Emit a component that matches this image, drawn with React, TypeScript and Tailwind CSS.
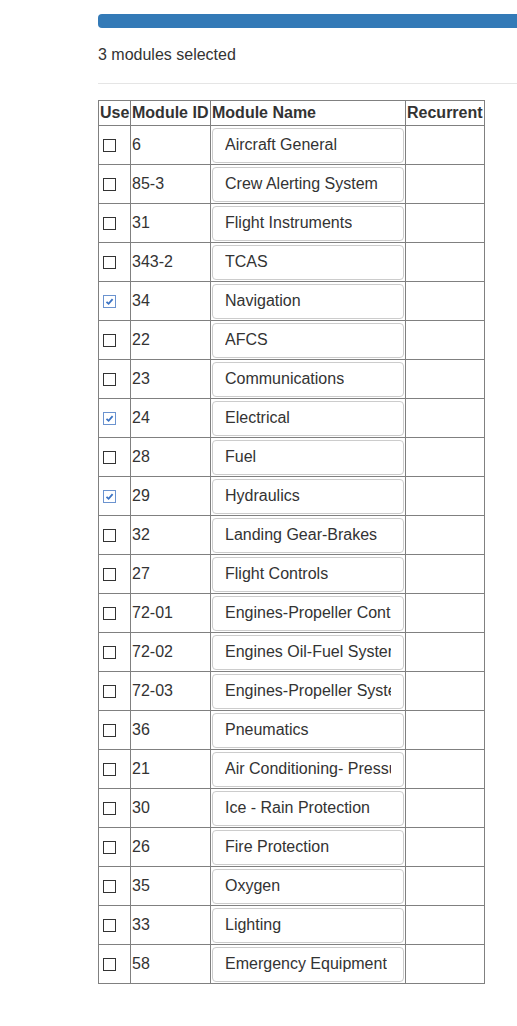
import React from 'react';

const modules = [
  { id: '6', name: 'Aircraft General', checked: false },
  { id: '85-3', name: 'Crew Alerting System', checked: false },
  { id: '31', name: 'Flight Instruments', checked: false },
  { id: '343-2', name: 'TCAS', checked: false },
  { id: '34', name: 'Navigation', checked: true },
  { id: '22', name: 'AFCS', checked: false },
  { id: '23', name: 'Communications', checked: false },
  { id: '24', name: 'Electrical', checked: true },
  { id: '28', name: 'Fuel', checked: false },
  { id: '29', name: 'Hydraulics', checked: true },
  { id: '32', name: 'Landing Gear-Brakes', checked: false },
  { id: '27', name: 'Flight Controls', checked: false },
  { id: '72-01', name: 'Engines-Propeller Controls', checked: false },
  { id: '72-02', name: 'Engines Oil-Fuel System', checked: false },
  { id: '72-03', name: 'Engines-Propeller System', checked: false },
  { id: '36', name: 'Pneumatics', checked: false },
  { id: '21', name: 'Air Conditioning- Pressurization', checked: false },
  { id: '30', name: 'Ice - Rain Protection', checked: false },
  { id: '26', name: 'Fire Protection', checked: false },
  { id: '35', name: 'Oxygen', checked: false },
  { id: '33', name: 'Lighting', checked: false },
  { id: '58', name: 'Emergency Equipment', checked: false },
];

const Check = ({ checked }: { checked: boolean }) =>
  checked ? (
    <span className="ml-[3px] block w-[13px] h-[13px] border border-[#6b93cf] bg-white">
      <svg viewBox="0 0 11 11" className="w-[11px] h-[11px]">
        <path d="M2.5 5.8 L4.6 7.8 L8.6 3.2" fill="none" stroke="#3b73c4" strokeWidth="1.8" />
      </svg>
    </span>
  ) : (
    <span className="ml-[3px] block w-[13px] h-[13px] border border-[#333] bg-white" />
  );

export default function App() {
  return (
    <div className="min-h-[1026px] bg-white overflow-hidden text-[#333] pt-[14px] pl-[98px] font-['Liberation_Sans',Arial,sans-serif]">
      <div className="h-[14px] rounded-l-[4px] bg-[#337ab7]" />
      <div className="mt-[16px] text-[16px] leading-[22px]">3 modules selected</div>
      <hr className="mt-[17px] border-0 border-t border-[#e5e5e5]" />
      <table className="mt-[16px] table-fixed border-collapse border border-[#808080] w-[386px] text-[16px] leading-[22px]">
        <colgroup>
          <col className="w-[32px]" />
          <col className="w-[80px]" />
          <col className="w-[195px]" />
          <col className="w-[79px]" />
        </colgroup>
        <thead>
          <tr className="h-[25px]">
            <th className="border border-[#808080] p-px text-left font-bold">Use</th>
            <th className="border border-[#808080] p-px text-left font-bold whitespace-nowrap">Module ID</th>
            <th className="border border-[#808080] p-px text-left font-bold">Module Name</th>
            <th className="border border-[#808080] p-px text-left font-bold">Recurrent</th>
          </tr>
        </thead>
        <tbody>
          {modules.map((m) => (
            <tr key={m.id} className="h-[39px]">
              <td className="border border-[#808080] p-px align-middle">
                <Check checked={m.checked} />
              </td>
              <td className="border border-[#808080] p-px align-middle">{m.id}</td>
              <td className="border border-[#808080] p-px align-middle">
                <div className="w-[192px] h-[35px] border border-[#cccccc] rounded-[4px] px-[12px] flex items-center bg-white">
                  <span className="block overflow-hidden whitespace-nowrap">{m.name}</span>
                </div>
              </td>
              <td className="border border-[#808080] p-px" />
            </tr>
          ))}
        </tbody>
      </table>
    </div>
  );
}
